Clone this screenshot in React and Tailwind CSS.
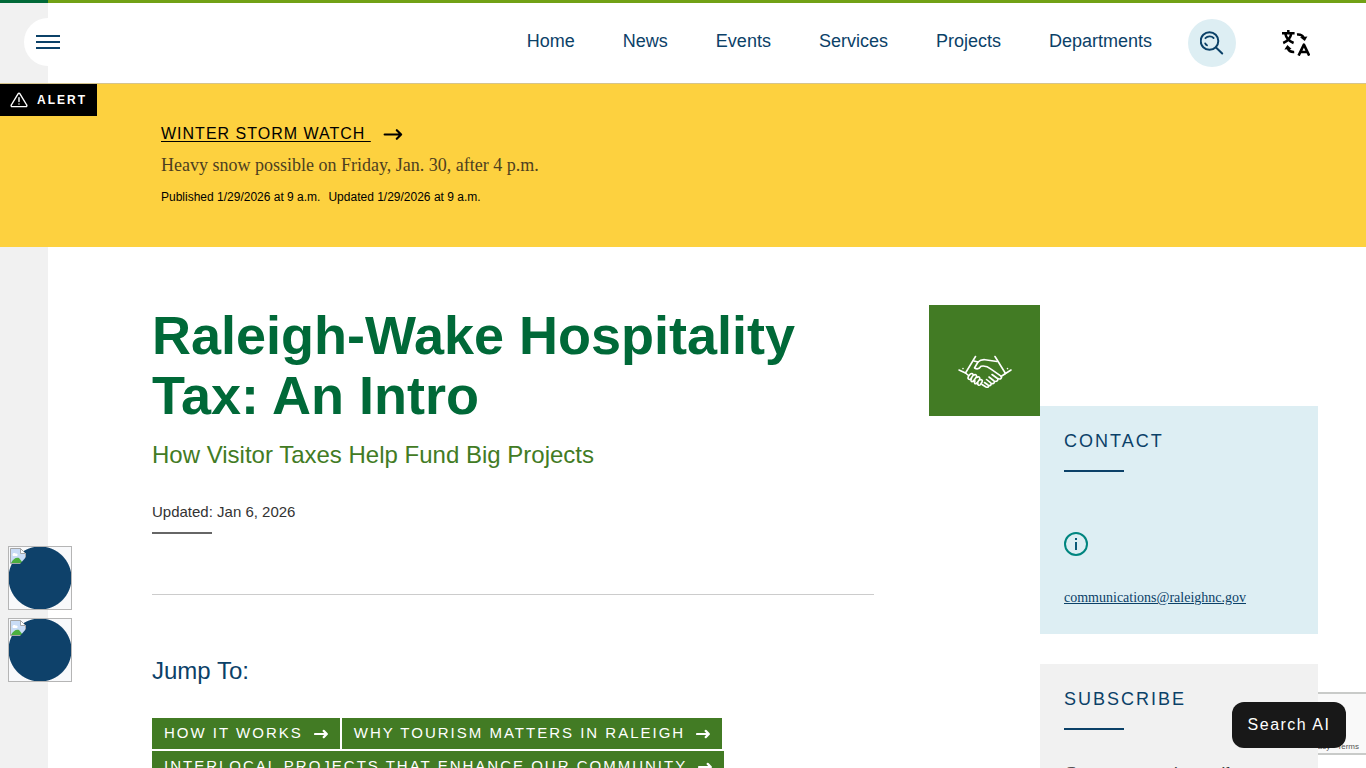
const NAV_LINKS = ['Home', 'News', 'Events', 'Services', 'Projects', 'Departments'];

const JUMP_LINKS = [
  { id: 'how-it-works', label: 'How it works' },
  { id: 'why-tourism', label: 'Why tourism matters in Raleigh' },
  { id: 'interlocal', label: 'Interlocal projects that enhance our community' },
];

const SIDE_BUTTONS = ['Chat', 'Feedback'];

function SearchIcon() {
  return (
    <svg viewBox="0 0 24 24" className="h-6 w-6" fill="none" stroke="#0b4168" strokeWidth="2" strokeLinecap="round">
      <circle cx="9.5" cy="10" r="8.8" />
      <path d="M16 16.5 22.200 22.500" />
      <path d="M5.400 7.200C7.600 5 11.400 4.800 13.600 7" strokeWidth="1.800" />
      <path d="M5.200 12.400C5.600 13.300 6.200 13.900 7 14.300" strokeWidth="1.800" />
    </svg>
  );
}

function TranslateIcon() {
  return (
    <svg viewBox="0 0 28 26" className="h-[26px] w-7" fill="none" stroke="#000" strokeWidth="2.500">
      <path d="M0 3.200h12.600M6.300 0v3.200M1.200 13C5.600 11.200 8.600 7.600 9.400 3.200M3.200 3.200C4 7.600 7 11.200 11.600 13" />
      <path d="M15 4.600c2.800-.400 5.200.400 6.600 3" />
      <path d="M18 7.200l7.400-.600-2.600 4.400z" fill="#000" stroke="none" />
      <path d="M12.200 22c-2.800.200-5.200-.600-6.200-3.200" />
      <path d="M2.400 19.400l3-4.400 4.200 4z" fill="#000" stroke="none" />
      <path d="M16.600 25.600 21.900 14.600 27.200 25.600M18.400 22h7" strokeWidth="2.600" strokeLinejoin="round" />
    </svg>
  );
}

function AlertIcon() {
  return (
    <svg viewBox="0 0 18 16" className="h-4 w-[18px]" fill="none" stroke="#fff" strokeWidth="1.400" strokeLinejoin="round" strokeLinecap="round">
      <path d="M8.200 1.600 1.300 13a1 1 0 0 0 .9 1.600h13.600a1 1 0 0 0 .9-1.600L9.800 1.600a1 1 0 0 0-1.600 0z" />
      <path d="M9 5.600v4M9 12v.1" />
    </svg>
  );
}

function Arrow({ className, strokeWidth }) {
  return (
    <svg viewBox="0 0 18 12" className={className} fill="none" stroke="currentColor" strokeWidth={strokeWidth} strokeLinecap="round" strokeLinejoin="round">
      <path d="M1.300 6h15M12.500 2 16.500 6 12.500 10" />
    </svg>
  );
}

function HandshakeIcon() {
  return (
    <svg viewBox="0 0 54 34" className="h-[34px] w-[54px]" fill="none" stroke="#fff" strokeWidth="1.600" strokeLinecap="round" strokeLinejoin="round">
      <path d="M17.500 1.500 7.500 18 1 15M37 1.500 47.500 18.500 53 15" />
      <path d="M16 6l4 1c2-2 4-2.500 7-2.300l12 1.800" />
      <path d="M20 7 16.500 13c2.500 1.500 5 .500 6.500-1.800 4.500-1 7 .500 10 3l10 7c1.500 1.500-.500 3.500-2.500 2.500" />
      <path d="M7.500 18 10.500 20.500M47.500 18.500 43 21.500" />
      <path d="M11 20.500c2-3 4.500-2.500 4 0l-2 3c-1.500 2-4 .500-2.500-2zM15 20.500c3-2 4.500 0 3 2l-2.500 3.500c-2 1.500-3.500 0-2-2.500M18.500 22.500c2.500-1.500 4 0 3 2L19 28c-2 1.500-3.500 0-2-2M21.500 25c2.500-1 3.500.500 2.500 2l-1.500 2.500c-1.500 1.500-3.500.500-2.500-1.500" />
      <path d="M24 29.500 28 32c2 .800 3.500-.500 2-2L26.500 27.500M30.500 30.500c2.500.500 3.500-1.500 2-2.800L28.500 24.500M33.500 28.500c2.500.500 4-1.500 2-3L31 22M37 26.500c2.500 0 3.500-1.500 2.500-3L34 19.500" />
      <path d="M5 13.500v.1M49.500 13.500v.1" />
    </svg>
  );
}

function InfoIcon() {
  return (
    <svg viewBox="0 0 24 24" className="h-6 w-6" fill="none" stroke="#00857f" strokeWidth="2">
      <circle cx="12" cy="12" r="11" />
      <path d="M12 10v8M12 6v2" stroke="#0b5a78" />
    </svg>
  );
}

function MissingImage() {
  return (
    <svg viewBox="0 0 16 16" className="h-4 w-4">
      <path d="M.5.500h10l5 5v10H.500z" fill="#c9dcf6" stroke="#a5a5a5" />
      <path d="M10.500.500v5h5z" fill="#fff" stroke="#a5a5a5" />
      <path d="M2.500 7c0-2 2-2.500 3-1.500 2-.500 3 1.500 1.500 2.500H3z" fill="#fff" />
      <path d="M1 15c2-4 5-6 8-5l4 5z" fill="#4caf3f" />
      <path d="M10 16 16 9v7z" fill="#0e416a" />
    </svg>
  );
}

function Header() {
  return (
    <header className="flex border-b border-[#d6c48c] text-[#0b4168]">
      <div className="w-12 shrink-0 border-t-[3px] border-[#006938] bg-[#f1f1f1]" />
      <div className="flex h-[83px] flex-1 items-center border-t-[3px] border-[#71a115] pr-14">
        <button type="button" aria-label="Menu" className="mb-0.5 -ml-6 flex h-12 w-12 flex-col items-center justify-center gap-1 rounded-full bg-white">
          <span className="h-0.5 w-6 bg-[#0b4168]" />
          <span className="h-0.5 w-6 bg-[#0b4168]" />
          <span className="h-0.5 w-6 bg-[#0b4168]" />
        </button>
        <nav className="mb-1 ml-auto flex gap-12 text-lg leading-6">
          {NAV_LINKS.map((label) => (
            <a key={label} href="#">{label}</a>
          ))}
        </nav>
        <button type="button" aria-label="Search" className="ml-9 flex h-12 w-12 items-center justify-center rounded-full bg-[#ddeef3]">
          <SearchIcon />
        </button>
        <button type="button" aria-label="Translate" className="ml-[46px]">
          <TranslateIcon />
        </button>
      </div>
    </header>
  );
}

function AlertBanner() {
  return (
    <section className="flex items-start bg-[#fdd13f] pb-10">
      <div className="flex h-8 w-[97px] items-center gap-[9px] bg-black pl-[10px] text-xs font-bold tracking-[2px] text-white">
        <AlertIcon />
        ALERT
      </div>
      <div className="ml-16 pt-10 text-black">
        <a href="#" className="flex items-center gap-3 text-base leading-5 tracking-[1px]">
          <span className="whitespace-pre underline underline-offset-2">{'WINTER STORM WATCH '}</span>
          <Arrow className="h-[13px] w-5" strokeWidth={2} />
        </a>
        <p className="mt-[7px] font-['Liberation_Serif',serif] text-lg leading-7 text-[#4d4020]">
          Heavy snow possible on Friday, Jan. 30, after 4 p.m.
        </p>
        <p className="mt-2 flex gap-2 text-xs leading-5">
          <span>Published 1/29/2026 at 9 a.m.</span>
          <span>Updated 1/29/2026 at 9 a.m.</span>
        </p>
      </div>
    </section>
  );
}

function Article() {
  return (
    <article className="flex-1 pr-[55px]">
      <h1 className="text-[54px] leading-[60px] font-bold text-[#006938]">Raleigh-Wake Hospitality Tax: An Intro</h1>
      <p className="mt-[14px] text-2xl leading-8 text-[#427b24]">How Visitor Taxes Help Fund Big Projects</p>
      <p className="mt-[29px] text-[15px] leading-6 text-[#333]">Updated: Jan 6, 2026</p>
      <div className="mt-2 h-0.5 w-[60px] bg-[#666]" />
      <hr className="mt-[60px] border-[#ccc]" />
      <h2 className="mt-[60px] text-2xl leading-8 text-[#0b4168]">Jump To:</h2>
      <nav className="mt-[31px] flex flex-wrap gap-0.5">
        {JUMP_LINKS.map((link) => (
          <a
            key={link.id}
            href={`#${link.id}`}
            className="flex h-[31px] items-center gap-[11px] bg-[#427b24] px-3 pb-px text-[15px] leading-5 tracking-[2px] text-white uppercase"
          >
            {link.label}
            <Arrow className="mt-0.5 h-[10px] w-[14px]" strokeWidth={2.8} />
          </a>
        ))}
      </nav>
    </article>
  );
}

function SideCard({ title, className, children }) {
  return (
    <section className={`relative z-10 px-6 pt-[23px] ${className}`}>
      <h2 className="text-lg leading-6 tracking-[2px] text-[#0b4168] uppercase">{title}</h2>
      <div className="mt-[17px] h-0.5 w-[60px] bg-[#0b4168]" />
      {children}
    </section>
  );
}

export default function App() {
  return (
    <div className="min-h-screen bg-white font-['Liberation_Sans',Arial,sans-serif]">
      <Header />
      <AlertBanner />
      <main className="flex items-start border-l-[48px] border-[#f1f1f1] pt-[58px] pr-12 pl-[104px]">
        <Article />
        <div className="flex h-[111px] w-[111px] items-center justify-center bg-[#427b24] pt-[22px]">
          <HandshakeIcon />
        </div>
        <aside className="mt-[101px] flex w-[278px] flex-col gap-[30px]">
          <SideCard title="Contact" className="bg-[#ddeef3] pb-6">
            <div className="mt-[60px]">
              <InfoIcon />
            </div>
            <a href="mailto:communications@raleighnc.gov" className="mt-[30px] block font-['Liberation_Serif',serif] text-sm leading-6 text-[#0b4168] underline">
              communications@raleighnc.gov
            </a>
          </SideCard>
          <SideCard title="Subscribe" className="bg-[#f1f1f1] pb-6">
            <p className="mt-[30px] font-['Liberation_Serif',serif] text-lg leading-7 text-[#333]">
              Get our news via email
            </p>
          </SideCard>
        </aside>
      </main>

      <div className="fixed bottom-[86px] left-2 flex flex-col gap-2">
        {SIDE_BUTTONS.map((label) => (
          <button
            key={label}
            type="button"
            aria-label={label}
            className="flex h-16 w-16 items-start border border-[#b5b5b5] bg-[radial-gradient(circle,#0e416a_31px,#f8f9fb_32px)] p-px"
          >
            <MissingImage />
          </button>
        ))}
      </div>

      <div className="fixed right-0 bottom-[13px] flex h-[63px] w-[70px] items-end justify-end border-y-2 border-[#c9cbc9] bg-[#f9f9f9] pr-[7px] text-[8px] leading-3 text-[#555]">
        Privacy - Terms
      </div>
      <button type="button" className="fixed right-5 bottom-5 z-20 h-[46px] min-w-[114px] rounded-xl bg-[#181818] px-[15px] text-base tracking-[1.5px] text-white">
        Search AI
      </button>
    </div>
  );
}
